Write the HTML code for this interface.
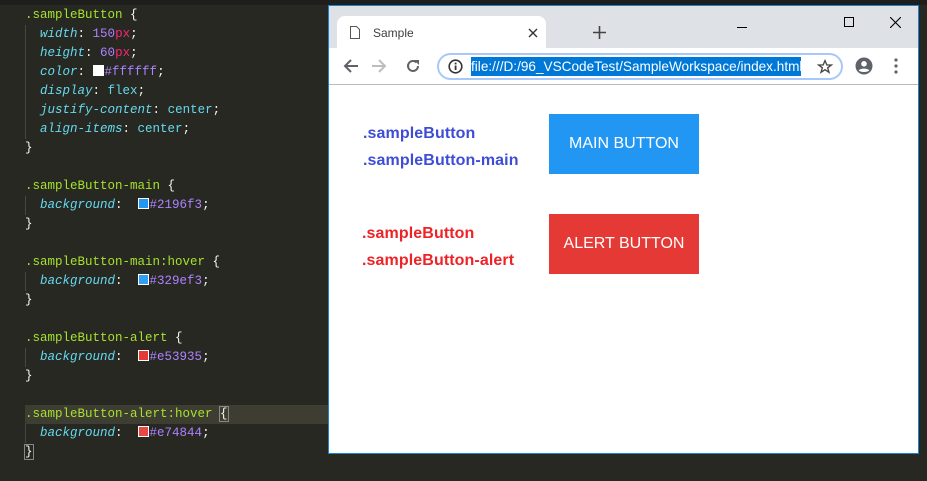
<!DOCTYPE html>
<html><head><meta charset="utf-8"><style>
*{margin:0;padding:0;box-sizing:border-box}
body{width:927px;height:481px;background:#272822;position:relative;overflow:hidden;font-family:"Liberation Sans",sans-serif}
.top{position:absolute;left:0;top:0;width:927px;height:5px;background:#1e1f1c}
.code{position:absolute;left:25px;top:6px;font-family:"Liberation Mono",monospace;font-size:12.5px;line-height:19px;color:#f8f8f2}
.l{height:19px;white-space:pre}
.s{color:#a6e22e}.p{color:#66d9ef;font-style:italic}.n{color:#ae81ff}.u{color:#f92672}.v{color:#66d9ef}
.sw{display:inline-block;width:11px;height:11px;border:1px solid #fff;vertical-align:-1px;margin-right:1px}
.guide{position:absolute;left:25px;width:1px;background:#464741}
.hl{position:absolute;left:25px;top:405px;width:304px;height:19px;background:#3e3d32}
.win{position:absolute;left:328px;top:5px;width:591px;height:449px;border:1px solid #1883d7;background:#fff}
.title{position:absolute;left:0;top:0;width:589px;height:42px;background:#dee1e6}
.tab{position:absolute;left:8px;top:10px;width:209px;height:33px;background:#fff;border-radius:8px 8px 0 0;font-size:12px;color:#3c4043}
.tool{position:absolute;left:0;top:42px;width:589px;height:37px;background:#fff;border-bottom:1px solid #bbb}
.addr{position:absolute;left:108px;top:5px;width:406px;height:27px;border:2px solid #a8c7fa;border-radius:14px}
.sel{position:absolute;left:32px;top:2px;height:19px;width:330px;background:#0078d7;color:#fff;font-size:13.6px;line-height:19px;white-space:nowrap;overflow:hidden}
.lab{position:absolute;font-size:16px;font-weight:bold;letter-spacing:0.1px}
.btn{position:absolute;width:150px;height:60px;color:#fff;display:flex;align-items:center;justify-content:center;font-size:16px}
</style></head><body>
<div class="top"></div>
<div class="hl"></div>
<div class="guide" style="top:25px;height:114px"></div>
<div class="guide" style="top:196px;height:19px"></div>
<div class="guide" style="top:272px;height:19px"></div>
<div class="guide" style="top:348px;height:19px"></div>
<div class="guide" style="top:424px;height:19px"></div>
<div class="code"><div class="l"><span class="s">.sampleButton</span> {</div><div class="l">  <span class="p">width</span>: <span class="n">150</span><span class="u">px</span>;</div><div class="l">  <span class="p">height</span>: <span class="n">60</span><span class="u">px</span>;</div><div class="l">  <span class="p">color</span>: <span class="sw" style="background:#fff"></span><span class="n">#ffffff</span>;</div><div class="l">  <span class="p">display</span>: <span class="v">flex</span>;</div><div class="l">  <span class="p">justify-content</span>: <span class="v">center</span>;</div><div class="l">  <span class="p">align-items</span>: <span class="v">center</span>;</div><div class="l">}</div><div class="l"></div><div class="l"><span class="s">.sampleButton-main</span> {</div><div class="l">  <span class="p">background</span>:  <span class="sw" style="background:#2196f3"></span><span class="n">#2196f3</span>;</div><div class="l">}</div><div class="l"></div><div class="l"><span class="s">.sampleButton-main:hover</span> {</div><div class="l">  <span class="p">background</span>:  <span class="sw" style="background:#329ef3"></span><span class="n">#329ef3</span>;</div><div class="l">}</div><div class="l"></div><div class="l"><span class="s">.sampleButton-alert</span> {</div><div class="l">  <span class="p">background</span>:  <span class="sw" style="background:#e53935"></span><span class="n">#e53935</span>;</div><div class="l">}</div><div class="l"></div><div class="l"><span class="s">.sampleButton-alert:hover</span> <span style="outline:1px solid #888">{</span></div><div class="l">  <span class="p">background</span>:  <span class="sw" style="background:#e74844"></span><span class="n">#e74844</span>;</div><div class="l"><span style="outline:1px solid #888">}</span></div></div>
<div class="win">
 <div class="title">
  <div class="tab">
   <svg style="position:absolute;left:13px;top:10px" width="10" height="13" viewBox="0 0 10 13"><path d="M0.5 0.5H6.5L9.5 3.5V12.5H0.5Z" fill="none" stroke="#555"/></svg>
   <span style="position:absolute;left:36px;top:10px">Sample</span>
   <svg style="position:absolute;left:191px;top:12px" width="10" height="10"><path d="M1 1L9 9M9 1L1 9" stroke="#333" stroke-width="1.4"/></svg>
  </div>
  <svg style="position:absolute;left:264px;top:20px" width="13" height="13"><path d="M6.5 0V13M0 6.5H13" stroke="#444" stroke-width="1.6"/></svg>
  <div style="position:absolute;left:408px;top:21px;width:10px;height:1px;background:#000"></div>
  <div style="position:absolute;left:515px;top:11px;width:10px;height:10px;border:1px solid #000"></div>
  <svg style="position:absolute;left:561px;top:11px" width="11" height="11"><path d="M0 0L11 11M11 0L0 11" stroke="#000" stroke-width="1.1"/></svg>
 </div>
 <div class="tool">
  <svg style="position:absolute;left:14px;top:11px" width="16" height="14"><path d="M15 7H2M8 1L2 7L8 13" fill="none" stroke="#5f6368" stroke-width="2"/></svg>
  <svg style="position:absolute;left:42px;top:11px" width="16" height="14"><path d="M1 7H14M8 1L14 7L8 13" fill="none" stroke="#bdbdbd" stroke-width="2"/></svg>
  <svg style="position:absolute;left:76px;top:10px" width="16" height="16" viewBox="0 0 16 16"><path d="M13 8A5 5 0 1 1 11.5 4.4" fill="none" stroke="#5f6368" stroke-width="2"/><path d="M9 2H14V7Z" fill="#5f6368"/></svg>
  <div class="addr">
   <svg style="position:absolute;left:9px;top:4px" width="15" height="15"><circle cx="7.5" cy="7.5" r="6.3" fill="none" stroke="#333" stroke-width="1.6"/><rect x="6.7" y="6.5" width="1.8" height="4.5" fill="#333"/><rect x="6.7" y="3.6" width="1.8" height="1.8" fill="#333"/></svg>
   <div class="sel">file:///D:/96_VSCodeTest/SampleWorkspace/index.html</div>
   <svg style="position:absolute;left:378px;top:4px" width="16" height="16" viewBox="0 0 24 24"><path d="M12 2.5L14.8 9H21.5L16 13.2L18 20L12 16L6 20L8 13.2L2.5 9H9.2Z" fill="none" stroke="#444" stroke-width="2"/></svg>
  </div>
  <svg style="position:absolute;left:526px;top:9px" width="18" height="18" viewBox="0 0 18 18"><circle cx="9" cy="9" r="8.5" fill="#5f6368"/><circle cx="9" cy="6.8" r="2.8" fill="#fff"/><path d="M3.8 13.5C5 11 13 11 14.2 13.5C12.5 15.5 5.5 15.5 3.8 13.5Z" fill="#fff"/></svg>
  <svg style="position:absolute;left:565px;top:10px" width="4" height="16"><circle cx="2" cy="2" r="1.6" fill="#5f6368"/><circle cx="2" cy="8" r="1.6" fill="#5f6368"/><circle cx="2" cy="14" r="1.6" fill="#5f6368"/></svg>
 </div>
 <div class="lab" style="left:34px;top:119px;color:#3f4dd6">.sampleButton</div>
 <div class="lab" style="left:34px;top:146px;color:#3f4dd6">.sampleButton-main</div>
 <div class="lab" style="left:33px;top:219px;color:#ee2327">.sampleButton</div>
 <div class="lab" style="left:33px;top:246px;color:#ee2327">.sampleButton-alert</div>
 <div class="btn" style="left:220px;top:108px;background:#2196f3">MAIN BUTTON</div>
 <div class="btn" style="left:220px;top:208px;background:#e53935">ALERT BUTTON</div>
</div>
</body></html>
